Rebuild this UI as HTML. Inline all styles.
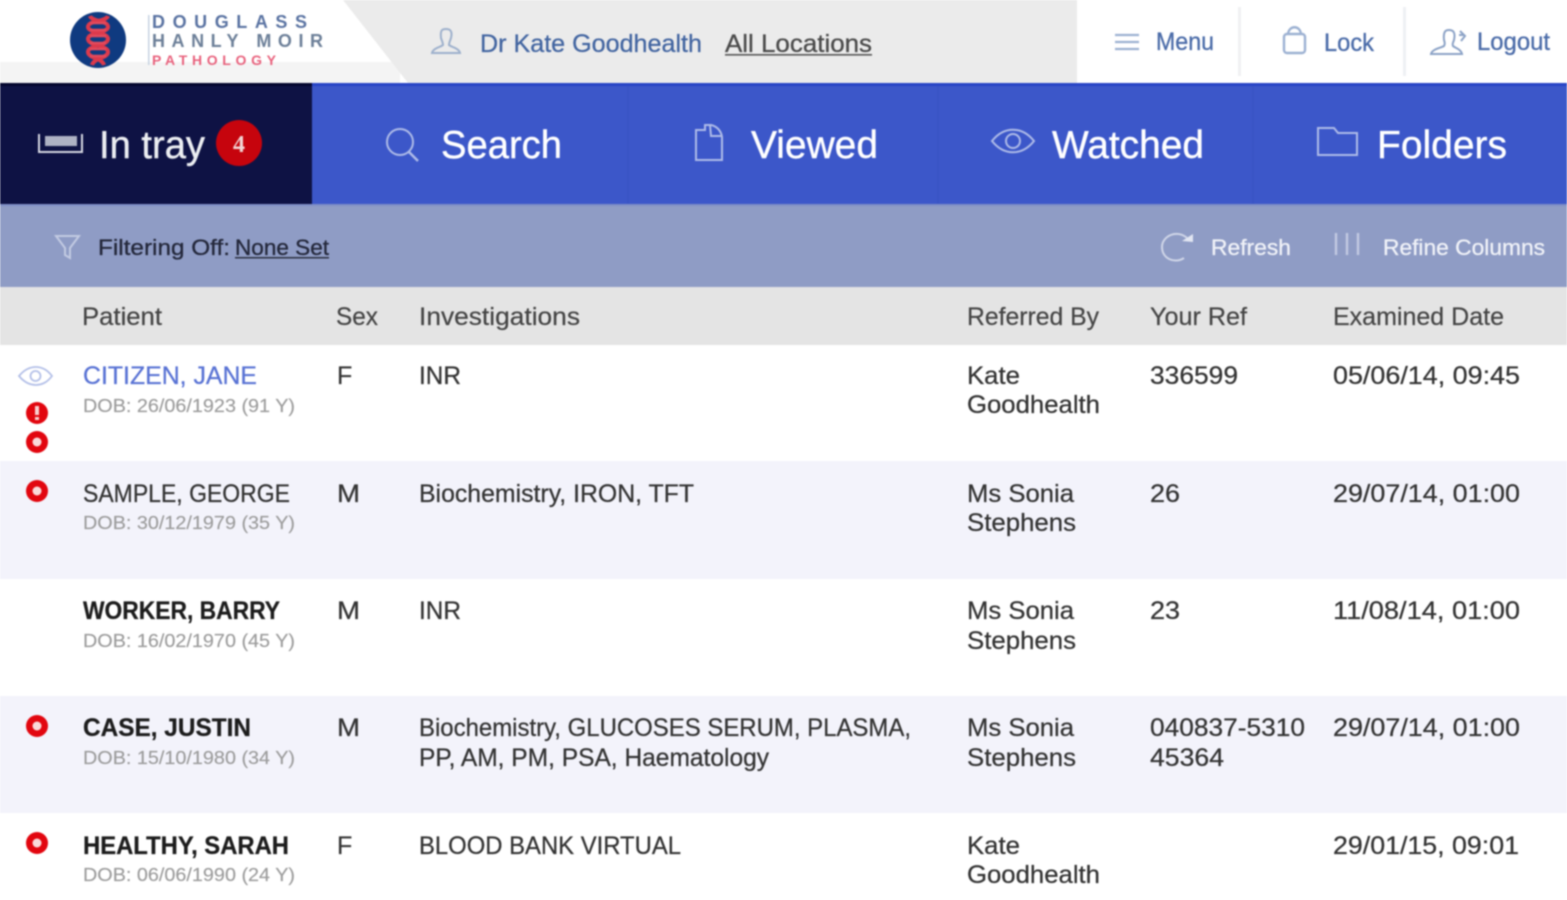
<!DOCTYPE html>
<html><head><meta charset="utf-8"><title>In tray</title>
<style>
html,body{margin:0;padding:0;background:#fff;width:1567px;height:900px;overflow:hidden}
svg{display:block;filter:blur(.7px)}
text{font-family:"Liberation Sans",sans-serif}
.t{font-size:25px;fill:#333;stroke:#333;stroke-width:.25px}
.h{font-size:25px;fill:#444;stroke:#444;stroke-width:.2px}
.d{font-size:18px;fill:#9c9c9c;stroke:#9c9c9c;stroke-width:.15px}
.b{font-weight:bold;fill:#1c1c1c;stroke:#1c1c1c}
.n{font-size:39px;fill:#fff;stroke:#fff;stroke-width:.4px}
.top{font-size:25px;fill:#4a6ba8;stroke:#4a6ba8;stroke-width:.3px}
.f{font-size:22px;fill:#f0f2f8;stroke:#f0f2f8;stroke-width:.3px}
.ic{fill:none;stroke:#aebbe8;stroke-width:2}
</style></head><body>
<svg width="1567" height="900" viewBox="0 0 1567 900" xmlns="http://www.w3.org/2000/svg">
<rect width="1567" height="900" fill="#fff"/>
<!-- top bar -->
<rect y="62" width="400" height="21" fill="#f4f4f4"/>
<polygon points="343,0 1077,0 1077,83 408,83" fill="#ebebeb"/>
<rect x="1077" width="490" height="83" fill="#fff"/>
<!-- logo -->
<circle cx="98" cy="40" r="28" fill="#0f3a80"/>
<path d="M90 16 C92 22 108 20 108 27 C108 33 88 32 88 39 C88 46 108 45 108 52 C108 58 94 58 92 65" fill="none" stroke="#dc3a4c" stroke-width="4"/>
<path d="M108 16 C106 22 88 20 88 27 C88 33 108 32 108 39 C108 46 88 45 88 52 C88 58 102 58 104 65" fill="none" stroke="#dc3a4c" stroke-width="4"/>
<path d="M90 23h16M90 30h16M90 36h16M90 43h16M90 49h16M90 56h16" stroke="#e34a5c" stroke-width="2.5"/>
<rect x="148" y="15" width="1.5" height="50" fill="#c7d3e2"/>
<text x="152" y="28" font-size="18" font-weight="bold" fill="#5a73a2" textLength="155" lengthAdjust="spacing">DOUGLASS</text>
<text x="152" y="47" font-size="18" font-weight="bold" fill="#6c7f98" textLength="171" lengthAdjust="spacing">HANLY MOIR</text>
<text x="152" y="65" font-size="14" fill="#e8617c" font-weight="bold" textLength="124" lengthAdjust="spacing">PATHOLOGY</text>
<!-- user -->
<g fill="none" stroke="#9db0cc" stroke-width="2">
<path d="M441 38c-1-9 2-9 5-9s7 1 5 9c-1 3-2 5-2 7 2 2 10 3 11 8h-28c1-5 9-6 11-8 0-2-1-4-2-7z"/>
</g>
<text x="480" y="52" class="top" textLength="222" lengthAdjust="spacingAndGlyphs" style="fill:#41649f">Dr Kate Goodhealth</text>
<text x="725" y="52" font-size="25" fill="#4a4a4a" stroke="#4a4a4a" stroke-width=".3" textLength="147" lengthAdjust="spacingAndGlyphs">All Locations</text>
<rect x="725" y="54" width="147" height="1.6" fill="#555"/>
<!-- top right -->
<g stroke="#9cb1d2" stroke-width="2.2"><path d="M1115 35h24M1115 42h24M1115 49h24"/></g>
<text x="1156" y="50" class="top" textLength="58" lengthAdjust="spacingAndGlyphs">Menu</text>
<rect x="1238" y="7" width="3" height="69" fill="#f0f1f3"/>
<g fill="none" stroke="#9cb1d2" stroke-width="2.400"><rect x="1284" y="34" width="21" height="19" rx="3"/><path d="M1288 34c1-9 12-9 13 0"/></g>
<text x="1324" y="51" class="top" textLength="50" lengthAdjust="spacingAndGlyphs">Lock</text>
<rect x="1403" y="7" width="3" height="69" fill="#eef0f4"/>
<g fill="none" stroke="#8ba2c6" stroke-width="2"><path d="M1444 40c-1-9 2-10 5-10s7 1 5 10c-1 3-2 4-1 6 2 2 8 3 9 8h-31c1-5 10-6 13-8 1-2 1-3 0-6z"/><path d="M1459 35h5M1460 31l5 5-4 5"/></g>
<text x="1477" y="50" class="top" textLength="73" lengthAdjust="spacingAndGlyphs">Logout</text>
<!-- nav -->
<rect y="83" width="1567" height="122" fill="#3c57c9"/>
<rect y="83" width="1567" height="3" fill="#2844c6"/>
<rect y="83" width="312" height="122" fill="#0e1244"/>
<rect y="83" width="312" height="3" fill="#04062e"/>
<rect x="627" y="86" width="2" height="119" fill="#3a54c4"/><rect x="937" y="86" width="2" height="119" fill="#3a54c4"/><rect x="1252" y="86" width="2" height="119" fill="#3a54c4"/>
<path d="M39 134v18h43v-18" fill="none" stroke="#d6d8e2" stroke-width="2"/>
<rect x="45" y="136" width="32" height="10" fill="#aeb2c4"/>
<text x="99" y="158" class="n" textLength="106" lengthAdjust="spacingAndGlyphs" style="fill:#eceef2;stroke:#eceef2">In tray</text>
<circle cx="239" cy="143" r="23" fill="#c6040d"/>
<text x="239" y="152" text-anchor="middle" font-size="24" font-weight="bold" fill="#f1d5d5" style="font-family:'Liberation Serif',serif">4</text>
<g class="ic"><circle cx="400" cy="142" r="13"/><path d="M409 152l9 9" stroke-width="2.5"/></g>
<text x="441" y="158" class="n" textLength="121" lengthAdjust="spacingAndGlyphs">Search</text>
<g class="ic" stroke-width="2.4"><path d="M696 130h9v-5h6c5 1 10 5 11 12v23h-26z"/><path d="M710 125l1 11h10" stroke-width="2"/></g>
<text x="751" y="158" class="n" textLength="127" lengthAdjust="spacingAndGlyphs">Viewed</text>
<g class="ic"><path d="M992 141c12-15 30-15 42 0-12 15-30 15-42 0z"/><circle cx="1013" cy="141" r="7"/></g>
<text x="1052" y="158" class="n" textLength="152" lengthAdjust="spacingAndGlyphs">Watched</text>
<path class="ic" d="M1318 155v-27h16l4 5h19v22z"/>
<text x="1377" y="158" class="n" textLength="130" lengthAdjust="spacingAndGlyphs">Folders</text>
<!-- filter bar -->
<rect y="205" width="1567" height="82" fill="#8f9cc5"/>
<rect y="204" width="1567" height="2" fill="#7f8fc6"/>
<path d="M56 236h23l-9 12v10l-5-3v-7z" fill="none" stroke="#c2cae2" stroke-width="2"/>
<text x="98" y="255" font-size="22" fill="#23273a" stroke="#23273a" stroke-width=".3" textLength="132" lengthAdjust="spacingAndGlyphs">Filtering Off:</text>
<text x="235" y="255" font-size="22" fill="#23273a" stroke="#23273a" stroke-width=".3" textLength="94" lengthAdjust="spacingAndGlyphs">None Set</text>
<rect x="235" y="257" width="94" height="1.500" fill="#2c3040"/>
<path d="M1187 238c-10-9-25-2-25 9 0 12 13 17 22 11" fill="none" stroke="#d0d6e8" stroke-width="2"/>
<path d="M1182 241l11 1 0-8z" fill="#e2e6f2"/>
<text x="1211" y="255" class="f" textLength="80" lengthAdjust="spacingAndGlyphs">Refresh</text>
<path d="M1336 233v22M1347 233v22M1358 233v22" stroke="#c2cae2" stroke-width="2.400"/>
<text x="1383" y="255" class="f" textLength="162" lengthAdjust="spacingAndGlyphs">Refine Columns</text>
<!-- header -->
<rect y="287" width="1567" height="58" fill="#e4e4e4"/>
<text x="82" y="325" class="h" textLength="80" lengthAdjust="spacingAndGlyphs">Patient</text>
<text x="336" y="325" class="h" textLength="42" lengthAdjust="spacingAndGlyphs">Sex</text>
<text x="419" y="325" class="h" textLength="161" lengthAdjust="spacingAndGlyphs">Investigations</text>
<text x="967" y="325" class="h" textLength="132" lengthAdjust="spacingAndGlyphs">Referred By</text>
<text x="1150" y="325" class="h" textLength="97" lengthAdjust="spacingAndGlyphs">Your Ref</text>
<text x="1333" y="325" class="h" textLength="171" lengthAdjust="spacingAndGlyphs">Examined Date</text>
<!-- row backgrounds -->
<rect y="461" width="1567" height="118" fill="#f3f3fb"/>
<rect y="696" width="1567" height="117" fill="#f3f3fb"/>
<!-- row 1 -->
<g fill="none" stroke="#b4c0e8" stroke-width="1.8"><path d="M19 376c10-12 24-12 33 0-9 12-23 12-33 0z"/><circle cx="35.500" cy="376" r="5"/></g>
<circle cx="37" cy="413" r="11" fill="#e2060f"/><rect x="35" y="406" width="4" height="9" fill="#f8d0d0"/><rect x="35" y="417" width="4" height="3" fill="#f8d0d0"/>
<circle cx="37" cy="442" r="11" fill="#e2060f"/><circle cx="37" cy="442" r="4.500" fill="#f9dada"/>
<text x="83" y="384" class="t" style="fill:#5872d4;stroke:#5872d4" textLength="174" lengthAdjust="spacingAndGlyphs">CITIZEN, JANE</text>
<text x="83" y="412" class="d" textLength="212" lengthAdjust="spacingAndGlyphs">DOB: 26/06/1923 (91 Y)</text>
<text x="337" y="384" class="t">F</text>
<text x="419" y="384" class="t" textLength="42" lengthAdjust="spacingAndGlyphs">INR</text>
<text x="967" y="384" class="t" textLength="53" lengthAdjust="spacingAndGlyphs">Kate</text>
<text x="967" y="413" class="t" textLength="133" lengthAdjust="spacingAndGlyphs">Goodhealth</text>
<text x="1150" y="384" class="t" textLength="88" lengthAdjust="spacingAndGlyphs">336599</text>
<text x="1333" y="384" class="t" textLength="187" lengthAdjust="spacingAndGlyphs">05/06/14, 09:45</text>
<!-- row 2 -->
<circle cx="37" cy="491" r="11" fill="#e2060f"/><circle cx="37" cy="491" r="4.500" fill="#f9dada"/>
<text x="83" y="502" class="t" textLength="207" lengthAdjust="spacingAndGlyphs">SAMPLE, GEORGE</text>
<text x="83" y="529" class="d" textLength="212" lengthAdjust="spacingAndGlyphs">DOB: 30/12/1979 (35 Y)</text>
<text x="337" y="502" class="t" textLength="23" lengthAdjust="spacingAndGlyphs">M</text>
<text x="419" y="502" class="t" textLength="275" lengthAdjust="spacingAndGlyphs">Biochemistry, IRON, TFT</text>
<text x="967" y="502" class="t" textLength="107" lengthAdjust="spacingAndGlyphs">Ms Sonia</text>
<text x="967" y="531" class="t" textLength="109" lengthAdjust="spacingAndGlyphs">Stephens</text>
<text x="1150" y="502" class="t" textLength="30" lengthAdjust="spacingAndGlyphs">26</text>
<text x="1333" y="502" class="t" textLength="187" lengthAdjust="spacingAndGlyphs">29/07/14, 01:00</text>
<!-- row 3 -->
<text x="83" y="619" class="t b" textLength="197" lengthAdjust="spacingAndGlyphs">WORKER, BARRY</text>
<text x="83" y="647" class="d" textLength="212" lengthAdjust="spacingAndGlyphs">DOB: 16/02/1970 (45 Y)</text>
<text x="337" y="619" class="t" textLength="23" lengthAdjust="spacingAndGlyphs">M</text>
<text x="419" y="619" class="t" textLength="42" lengthAdjust="spacingAndGlyphs">INR</text>
<text x="967" y="619" class="t" textLength="107" lengthAdjust="spacingAndGlyphs">Ms Sonia</text>
<text x="967" y="649" class="t" textLength="109" lengthAdjust="spacingAndGlyphs">Stephens</text>
<text x="1150" y="619" class="t" textLength="30" lengthAdjust="spacingAndGlyphs">23</text>
<text x="1333" y="619" class="t" textLength="187" lengthAdjust="spacingAndGlyphs">11/08/14, 01:00</text>
<!-- row 4 -->
<circle cx="37" cy="726" r="11" fill="#e2060f"/><circle cx="37" cy="726" r="4.500" fill="#f9dada"/>
<text x="83" y="736" class="t b" textLength="168" lengthAdjust="spacingAndGlyphs">CASE, JUSTIN</text>
<text x="83" y="764" class="d" textLength="212" lengthAdjust="spacingAndGlyphs">DOB: 15/10/1980 (34 Y)</text>
<text x="337" y="736" class="t" textLength="23" lengthAdjust="spacingAndGlyphs">M</text>
<text x="419" y="736" class="t" textLength="492" lengthAdjust="spacingAndGlyphs">Biochemistry, GLUCOSES SERUM, PLASMA,</text>
<text x="419" y="766" class="t" textLength="350" lengthAdjust="spacingAndGlyphs">PP, AM, PM, PSA, Haematology</text>
<text x="967" y="736" class="t" textLength="107" lengthAdjust="spacingAndGlyphs">Ms Sonia</text>
<text x="967" y="766" class="t" textLength="109" lengthAdjust="spacingAndGlyphs">Stephens</text>
<text x="1150" y="736" class="t" textLength="155" lengthAdjust="spacingAndGlyphs">040837-5310</text>
<text x="1150" y="766" class="t" textLength="74" lengthAdjust="spacingAndGlyphs">45364</text>
<text x="1333" y="736" class="t" textLength="187" lengthAdjust="spacingAndGlyphs">29/07/14, 01:00</text>
<!-- row 5 -->
<circle cx="37" cy="843" r="11" fill="#e2060f"/><circle cx="37" cy="843" r="4.500" fill="#f9dada"/>
<text x="83" y="854" class="t b" textLength="206" lengthAdjust="spacingAndGlyphs">HEALTHY, SARAH</text>
<text x="83" y="881" class="d" textLength="212" lengthAdjust="spacingAndGlyphs">DOB: 06/06/1990 (24 Y)</text>
<text x="337" y="854" class="t">F</text>
<text x="419" y="854" class="t" textLength="262" lengthAdjust="spacingAndGlyphs">BLOOD BANK VIRTUAL</text>
<text x="967" y="854" class="t" textLength="53" lengthAdjust="spacingAndGlyphs">Kate</text>
<text x="967" y="883" class="t" textLength="133" lengthAdjust="spacingAndGlyphs">Goodhealth</text>
<text x="1333" y="854" class="t" textLength="186" lengthAdjust="spacingAndGlyphs">29/01/15, 09:01</text>
</svg>
</body></html>
